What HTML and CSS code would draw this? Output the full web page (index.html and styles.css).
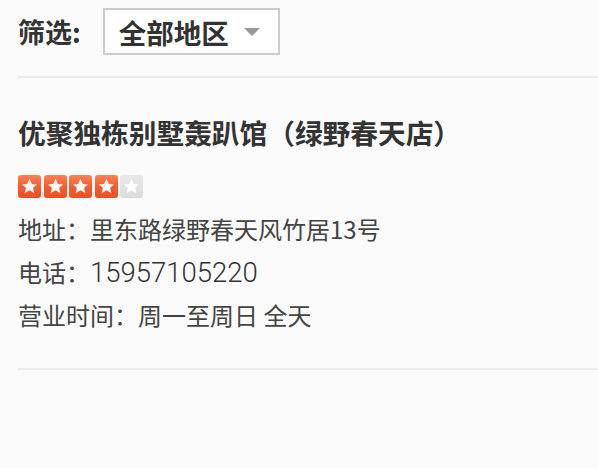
FILE: index.html
```html
<!DOCTYPE html>
<html lang="zh-CN">
<head>
<meta charset="utf-8">
<title>筛选</title>
<link rel="stylesheet" href="styles.css">
</head>
<body>
<div class="filter">
  <span class="filter-label">筛选:</span>
  <div class="select">
    <span class="select-text">全部地区</span>
    <span class="caret"></span>
  </div>
</div>
<div class="rule"></div>
<div class="shop">
  <h1 class="shop-title">优聚独栋别墅轰趴馆（绿野春天店）</h1>
  <div class="stars">
    <span class="star on"><svg viewBox="0 0 24 24"><polygon points="12,4 14.4,9.3 20,9.8 15.7,13.4 17.1,19 12,16 6.9,19 8.3,13.4 4,9.8 9.6,9.3"/></svg></span>
    <span class="star on"><svg viewBox="0 0 24 24"><polygon points="12,4 14.4,9.3 20,9.8 15.7,13.4 17.1,19 12,16 6.9,19 8.3,13.4 4,9.8 9.6,9.3"/></svg></span>
    <span class="star on"><svg viewBox="0 0 24 24"><polygon points="12,4 14.4,9.3 20,9.8 15.7,13.4 17.1,19 12,16 6.9,19 8.3,13.4 4,9.8 9.6,9.3"/></svg></span>
    <span class="star on"><svg viewBox="0 0 24 24"><polygon points="12,4 14.4,9.3 20,9.8 15.7,13.4 17.1,19 12,16 6.9,19 8.3,13.4 4,9.8 9.6,9.3"/></svg></span>
    <span class="star off"><svg viewBox="0 0 24 24"><polygon points="12,4 14.4,9.3 20,9.8 15.7,13.4 17.1,19 12,16 6.9,19 8.3,13.4 4,9.8 9.6,9.3"/></svg></span>
  </div>
  <p class="info">地址：里东路绿野春天风竹居13号</p>
  <p class="info">电话：<span class="num">15957105220</span></p>
  <p class="info">营业时间：周一至周日 全天</p>
</div>
<div class="rule bottom"></div>
</body>
</html>
```

FILE: styles.css
```css
* { box-sizing: border-box; }

body {
  margin: 0;
  background: #fafafa;
  font-family: "Noto Sans CJK SC", "Noto Sans", sans-serif;
  color: #333;
}

.filter {
  display: flex;
  align-items: center;
  padding: 8px 0 0 18px;
}

.filter-label {
  font-size: 27px;
  font-weight: 700;
  color: #333;
  line-height: 47px;
}

.select {
  display: flex;
  align-items: center;
  width: 177px;
  height: 47px;
  margin-left: 22px;
  padding-left: 14px;
  border: 2px solid #cccccc;
  background: #ffffff;
}

.select-text {
  font-size: 27.5px;
  font-weight: 700;
  color: #333;
}

.caret {
  width: 0;
  height: 0;
  margin-left: 15px;
  border-left: 8px solid transparent;
  border-right: 8px solid transparent;
  border-top: 8px solid #9a9a9a;
}

.rule {
  height: 2px;
  margin: 21px 0 0 18px;
  background: #ebebeb;
}

.rule.bottom {
  margin-top: 32px;
}

.shop {
  padding-left: 18px;
}

.shop-title {
  margin: 34px 0 0;
  font-size: 27.7px;
  font-weight: 700;
  line-height: 40px;
  color: #333;
}

.stars {
  display: flex;
  gap: 2.6px;
  margin-top: 23px;
  height: 23px;
}

.star {
  width: 23px;
  height: 23px;
  border-radius: 3px;
  display: flex;
  align-items: center;
  justify-content: center;
  filter: blur(0.3px);
}

.star svg {
  width: 23px;
  height: 23px;
  fill: #ffffff;
}

.star.on {
  background: linear-gradient(180deg, #ff8055 0%, #f75a2c 55%, #ee4f22 100%);
}

.star.off {
  background: linear-gradient(180deg, #e8e8e8 0%, #dcdcdc 100%);
}

.info {
  margin: 0;
  font-size: 24px;
  line-height: 43px;
  color: #444;
}

.info:first-of-type {
  margin-top: 9px;
}

.num {
  font-family: Roboto, "Noto Sans", sans-serif;
  font-weight: 300;
  font-size: 27.5px;
  line-height: 1;
  color: #333;
}
```
